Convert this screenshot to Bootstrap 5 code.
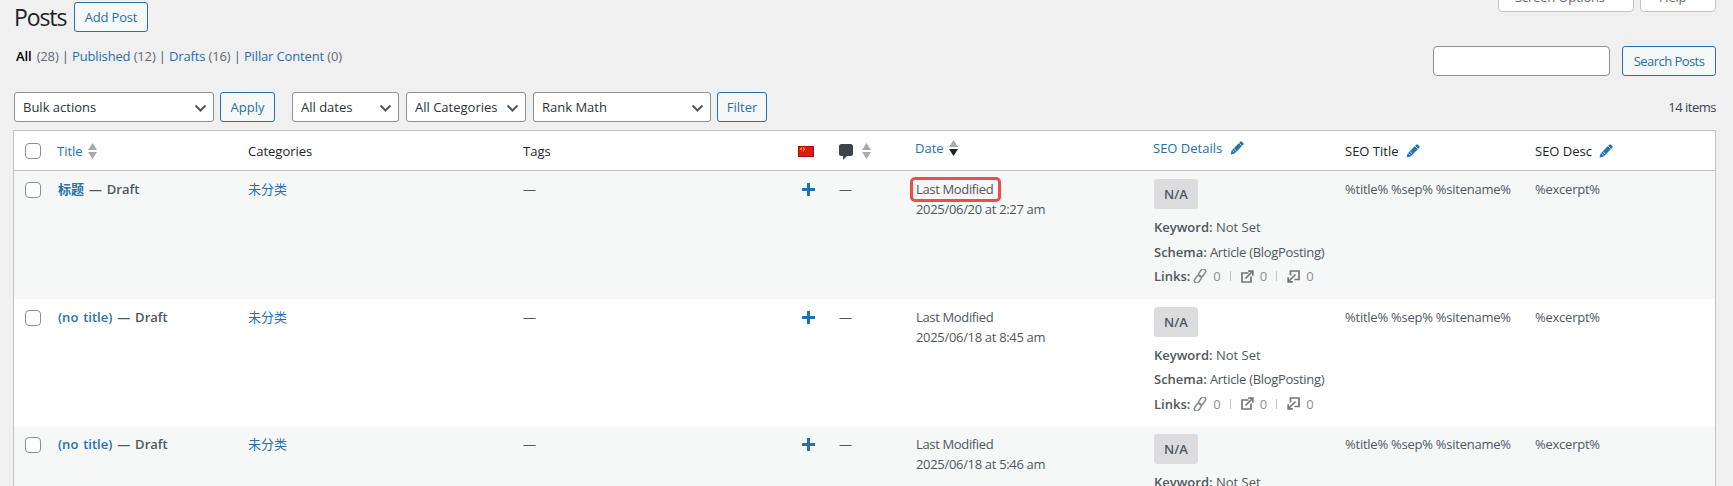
<!DOCTYPE html>
<html lang="en">
<head>
<meta charset="utf-8">
<title>Posts</title>
<link href="https://cdn.jsdelivr.net/npm/bootstrap@5.3.0/dist/css/bootstrap.min.css" rel="stylesheet">
<style>
html,body{height:486px;overflow:hidden;}
body{background:#f0f0f1;color:#3c434a;font-family:"Open Sans","Noto Sans CJK SC",sans-serif;font-size:13px;line-height:1.4;}
a{color:#2271b1;text-decoration:none;}
.wp-wrap{padding:0 17px 0 13px;}
.tab-strip{height:12px;gap:6px;}
.tab-btn{height:30px;background:#fff;border:1px solid #c3c4c7;border-radius:0 0 4px 4px;color:#646970;line-height:28px;flex:none;letter-spacing:-.2px;}
.tab-screen{width:136px;padding-left:16px;}
.tab-help{width:76px;padding-left:18px;}
.title-row{margin-top:-10px;height:30px;}
.page-title{font-size:23px;font-weight:400;color:#1d2327;margin:0 0 0 1px;line-height:30px;letter-spacing:-1.1px;width:51px;flex:none;}
.wp-btn{height:30px;padding:0 10px;font-size:13px;line-height:28px;color:#2271b1;border:1px solid #2271b1;background:#f6f7f7;border-radius:3px;flex:none;}
.btn-add{width:74px;margin-left:9px;padding:0;letter-spacing:-.2px;}
.sub-row{margin-top:14px;height:30px;}
.sub-links{padding-left:3px;line-height:20px;color:#646970;letter-spacing:-.15px;}
.sub-links b{color:#000;font-weight:600;margin-right:2px;}
.sub-links i{font-style:normal;color:#50575e;}
.search-box{width:177px;height:30px;border:1px solid #8c8f94;border-radius:4px;background:#fff;margin-right:12px;}
.btn-search{width:94px;padding:0;letter-spacing:-.55px;}
.tool-row{margin-top:16px;height:30px;}
.wp-select{height:30px;padding:0 24px 0 8px;font-size:13px;line-height:28px;color:#2c3338;border:1px solid #8c8f94;border-radius:3px;flex:none;background-size:13px 13px;background-position:right 6px center;background-image:url("data:image/svg+xml,%3Csvg xmlns='http://www.w3.org/2000/svg' viewBox='0 0 13 13'%3E%3Cpath d='M1.5 4.500l5 5 5-5' fill='none' stroke='%2350575e' stroke-width='2'/%3E%3C/svg%3E");}
.sel-bulk{width:200px;margin-left:1px;}
.sel-dates{width:107px;margin-left:17px;}
.sel-cats{width:120px;margin-left:7px;}
.sel-rank{width:178px;margin-left:7px;}
.btn-apply{width:55px;margin-left:6px;padding:0;}
.btn-filter{width:50px;margin-left:6px;padding:0;}
.items-num{margin-left:auto;color:#3c434a;letter-spacing:-.5px;}
.post-table{margin:8px 0 0;table-layout:fixed;width:1703px;border:1px solid #c3c4c7;background:#fff;border-collapse:separate;border-spacing:0;}
.post-table>:not(caption)>*>*{padding:0;border:0;background:transparent;box-shadow:none;color:inherit;vertical-align:top;}
.post-table thead th{height:40px;border-bottom:1px solid #c3c4c7;font-weight:400;color:#1d2327;padding:10px 10px 0;font-size:13px;line-height:20px;}
.post-table tbody td{padding:8px 10px 0;height:127.5px;color:#50575e;line-height:20px;}
.post-table tbody tr.odd-row{background:#f6f7f7;}
.c-check{width:33px;} .c-title{width:191px;} .c-cats{width:275px;} .c-tags{width:275px;}
.c-lang{width:41px;} .c-com{width:76px;} .c-date{width:238px;} .c-det{width:192px;} .c-seo{width:190px;}
.post-table .form-check-input{width:16px;height:16px;margin:3px 0 0 11px;border:1px solid #8c8f94;border-radius:4px;display:block;}
.post-table thead .form-check-input{margin-top:12px;}
.row-title{font-weight:600;padding-left:1px;display:inline-block;word-spacing:1.5px;}
.row-title span{color:#50575e;}
.head-link{display:inline-flex;align-items:center;gap:5px;}
.edit-gap{gap:7px;}
.wide-edit{gap:8px;}
.bubble-gap{gap:9px;}
.raise{position:relative;top:-3px;}
.flag-ico{display:block;margin-top:5px;}
.bubble-ico{margin-top:3px;}
.plus-ico{display:block;margin:4px 0 0 4px;}
.modified{display:inline-block;position:relative;letter-spacing:-.35px;}
.post-table tbody td.date-cell{padding-left:11px;}
.date-line{line-height:20px;letter-spacing:-.32px;}
.hi-box{position:absolute;left:-6px;right:-8px;top:-2px;bottom:-3px;border:3px solid #ee4b4f;border-radius:5px;pointer-events:none;}
.na-box{width:44px;height:30px;border-radius:3px;background:#dcdcde;font-weight:600;color:#50575e;text-align:center;line-height:30px;margin:0 0 0 1px;}
.det-line{margin:8.5px 0 0 1px;line-height:16px;white-space:nowrap;}
.na-box+.det-line{margin-top:10px;}
.det-line b{font-weight:600;}
.tight-line{letter-spacing:-.3px;}
.tight-line b{letter-spacing:0;}
.link-line{display:flex;align-items:center;}
.link-line svg{flex:none;}
.ico-first{margin-left:3px;}
.lnk-num{color:#8c8f94;margin-left:6px;}
.lnk-sep{display:block;width:1px;height:10px;background:#c3c4c7;margin:0 10px 0 9px;}
.seo-cell{white-space:nowrap;letter-spacing:-.25px;}
</style>
</head>
<body>
<svg width="0" height="0" class="d-none">
<symbol id="i-sort" viewBox="0 0 9 16"><path d="M4.500 0L9 7H0z" fill="#a7aaad"/><path d="M0 9h9l-4.500 7z" fill="#a7aaad"/></symbol>
<symbol id="i-sortd" viewBox="0 0 9 16"><path d="M4.500 0L9 7H0z" fill="#a7aaad"/><path d="M0 9h9l-4.500 7z" fill="#1d2327"/></symbol>
<symbol id="i-pencil" viewBox="0 0 14 14"><path d="M10.200.8a1.200 1.200 0 0 1 1.700 0l1.300 1.300a1.200 1.200 0 0 1 0 1.700L4.600 12.400.6 13.400l1-4z" fill="#2271b1"/><path d="M2.600 9.400l1.900 1.900M4.200 7.800l1.900 1.900" stroke="#fff" stroke-width=".8"/><path d="M9.200 2.200l2.600 2.600" stroke="#fff" stroke-width=".8"/></symbol>
<symbol id="i-link" viewBox="0 0 14 14"><g fill="none" stroke="#8c8f94" stroke-width="1.600" transform="rotate(-55 7 7)"><rect x="-1" y="4.600" width="8.500" height="4.800" rx="2.400"/><rect x="6.500" y="4.600" width="8.500" height="4.800" rx="2.400"/></g></symbol>
<symbol id="i-ext" viewBox="0 0 13 13"><path d="M7.500 3H1v9h9V6.500" fill="none" stroke="#72777c" stroke-width="1.700"/><path d="M4.500 8.500L11 2M7.200 1.200h4.600v4.600" fill="none" stroke="#72777c" stroke-width="1.700"/></symbol>
<symbol id="i-int" viewBox="0 0 13 13"><path d="M3.500 5.500V1H12v8.500H7.500" fill="none" stroke="#72777c" stroke-width="1.700"/><path d="M2 11L8.500 4.500M1.200 7.200v4.600h4.600" fill="none" stroke="#72777c" stroke-width="1.700"/></symbol>
</svg>
<div class="wp-wrap">
  <div class="tab-strip d-flex justify-content-end align-items-end">
    <div class="tab-btn tab-screen">Screen Options</div>
    <div class="tab-btn tab-help">Help</div>
  </div>
  <div class="title-row d-flex align-items-center">
    <h1 class="page-title">Posts</h1>
    <a class="wp-btn btn-add text-center" href="#">Add Post</a>
  </div>
  <div class="sub-row d-flex justify-content-between">
    <div class="sub-links"><b>All</b> (28) <i>|</i> <a href="#">Published</a> (12) <i>|</i> <a href="#">Drafts</a> (16) <i>|</i> <a href="#">Pillar Content</a> (0)</div>
    <div class="d-flex">
      <input class="search-box" type="text" aria-label="Search">
      <button class="wp-btn btn-search" type="button">Search Posts</button>
    </div>
  </div>
  <div class="tool-row d-flex align-items-center">
    <select class="form-select wp-select sel-bulk" aria-label="Bulk"><option>Bulk actions</option></select>
    <button class="wp-btn btn-apply" type="button">Apply</button>
    <select class="form-select wp-select sel-dates" aria-label="Dates"><option>All dates</option></select>
    <select class="form-select wp-select sel-cats" aria-label="Categories"><option>All Categories</option></select>
    <select class="form-select wp-select sel-rank" aria-label="Rank Math"><option>Rank Math</option></select>
    <button class="wp-btn btn-filter" type="button">Filter</button>
    <span class="items-num">14 items</span>
  </div>
  <table class="table post-table">
    <colgroup><col class="c-check"><col class="c-title"><col class="c-cats"><col class="c-tags"><col class="c-lang"><col class="c-com"><col class="c-date"><col class="c-det"><col class="c-seo"><col class="c-seo"></colgroup>
    <thead><tr>
      <th class="p-0"><input class="form-check-input" type="checkbox" aria-label="Select all"></th>
      <th><a class="head-link" href="#">Title <svg width="9" height="16"><use href="#i-sort"/></svg></a></th>
      <th>Categories</th>
      <th>Tags</th>
      <th><svg class="flag-ico" width="16" height="11" viewBox="0 0 16 11"><rect width="16" height="11" fill="#d81e12"/><rect x=".5" y=".5" width="15" height="10" fill="none" stroke="#a90f0b"/><path d="M3.200 1.300l.7 2.200h-2.200l1.800-1.400.6 2.300-1.900-1.400z" fill="#ffde00"/><circle cx="5.600" cy="1.900" r=".7" fill="#ffde00"/><circle cx="6.400" cy="3.400" r=".7" fill="#ffde00"/><circle cx="5.400" cy="4.800" r=".6" fill="#ffde00"/></svg></th>
      <th><span class="head-link bubble-gap"><svg class="bubble-ico" width="14" height="16" viewBox="0 0 14 16"><path d="M2.500 0h9A2.500 2.500 0 0 1 14 2.500v7a2.500 2.500 0 0 1-2.500 2.500H8l-4 4v-4H2.500A2.500 2.500 0 0 1 0 9.500v-7A2.500 2.500 0 0 1 2.500 0z" fill="#3c434a"/></svg><svg width="9" height="16"><use href="#i-sort"/></svg></span></th>
      <th><a class="head-link raise" href="#">Date <svg width="9" height="16"><use href="#i-sortd"/></svg></a></th>
      <th><a class="head-link wide-edit raise" href="#">SEO Details <svg width="14" height="14"><use href="#i-pencil"/></svg></a></th>
      <th><span class="head-link edit-gap">SEO Title <svg width="14" height="14"><use href="#i-pencil"/></svg></span></th>
      <th><span class="head-link edit-gap">SEO Desc <svg width="14" height="14"><use href="#i-pencil"/></svg></span></th>
    </tr></thead>
    <tbody>
      <tr class="odd-row">
        <td class="p-0 pt-2"><input class="form-check-input" type="checkbox" aria-label="Select"></td>
        <td><div class="row-title"><a href="#">标题</a> <span>— Draft</span></div></td>
        <td><a href="#">未分类</a></td>
        <td>—</td>
        <td><svg class="plus-ico" width="13" height="13" viewBox="0 0 13 13"><path d="M5 0h3v5h5v3H8v5H5V8H0V5h5z" fill="#2271b1"/></svg></td>
        <td>—</td>
        <td class="date-cell"><div class="date-line"><span class="modified">Last Modified<span class="hi-box"></span></span></div><div class="date-line">2025/06/20 at 2:27 am</div></td>
        <td><div class="na-box">N/A</div><div class="det-line"><b>Keyword:</b> Not Set</div><div class="det-line tight-line"><b>Schema:</b> Article (BlogPosting)</div><div class="det-line link-line"><b>Links:</b><svg class="ico-first" width="14" height="14"><use href="#i-link"/></svg><span class="lnk-num">0</span><span class="lnk-sep"></span><svg width="13" height="13"><use href="#i-ext"/></svg><span class="lnk-num">0</span><span class="lnk-sep"></span><svg width="13" height="13"><use href="#i-int"/></svg><span class="lnk-num">0</span></div></td>
        <td class="seo-cell">%title% %sep% %sitename%</td>
        <td class="seo-cell">%excerpt%</td>
      </tr>
      <tr>
        <td class="p-0 pt-2"><input class="form-check-input" type="checkbox" aria-label="Select"></td>
        <td><div class="row-title"><a href="#">(no title)</a> <span>— Draft</span></div></td>
        <td><a href="#">未分类</a></td>
        <td>—</td>
        <td><svg class="plus-ico" width="13" height="13" viewBox="0 0 13 13"><path d="M5 0h3v5h5v3H8v5H5V8H0V5h5z" fill="#2271b1"/></svg></td>
        <td>—</td>
        <td class="date-cell"><div class="date-line"><span class="modified">Last Modified</span></div><div class="date-line">2025/06/18 at 8:45 am</div></td>
        <td><div class="na-box">N/A</div><div class="det-line"><b>Keyword:</b> Not Set</div><div class="det-line tight-line"><b>Schema:</b> Article (BlogPosting)</div><div class="det-line link-line"><b>Links:</b><svg class="ico-first" width="14" height="14"><use href="#i-link"/></svg><span class="lnk-num">0</span><span class="lnk-sep"></span><svg width="13" height="13"><use href="#i-ext"/></svg><span class="lnk-num">0</span><span class="lnk-sep"></span><svg width="13" height="13"><use href="#i-int"/></svg><span class="lnk-num">0</span></div></td>
        <td class="seo-cell">%title% %sep% %sitename%</td>
        <td class="seo-cell">%excerpt%</td>
      </tr>
      <tr class="odd-row">
        <td class="p-0 pt-2"><input class="form-check-input" type="checkbox" aria-label="Select"></td>
        <td><div class="row-title"><a href="#">(no title)</a> <span>— Draft</span></div></td>
        <td><a href="#">未分类</a></td>
        <td>—</td>
        <td><svg class="plus-ico" width="13" height="13" viewBox="0 0 13 13"><path d="M5 0h3v5h5v3H8v5H5V8H0V5h5z" fill="#2271b1"/></svg></td>
        <td>—</td>
        <td class="date-cell"><div class="date-line"><span class="modified">Last Modified</span></div><div class="date-line">2025/06/18 at 5:46 am</div></td>
        <td><div class="na-box">N/A</div><div class="det-line"><b>Keyword:</b> Not Set</div></td>
        <td class="seo-cell">%title% %sep% %sitename%</td>
        <td class="seo-cell">%excerpt%</td>
      </tr>
    </tbody>
  </table>
</div>
</body>
</html>
